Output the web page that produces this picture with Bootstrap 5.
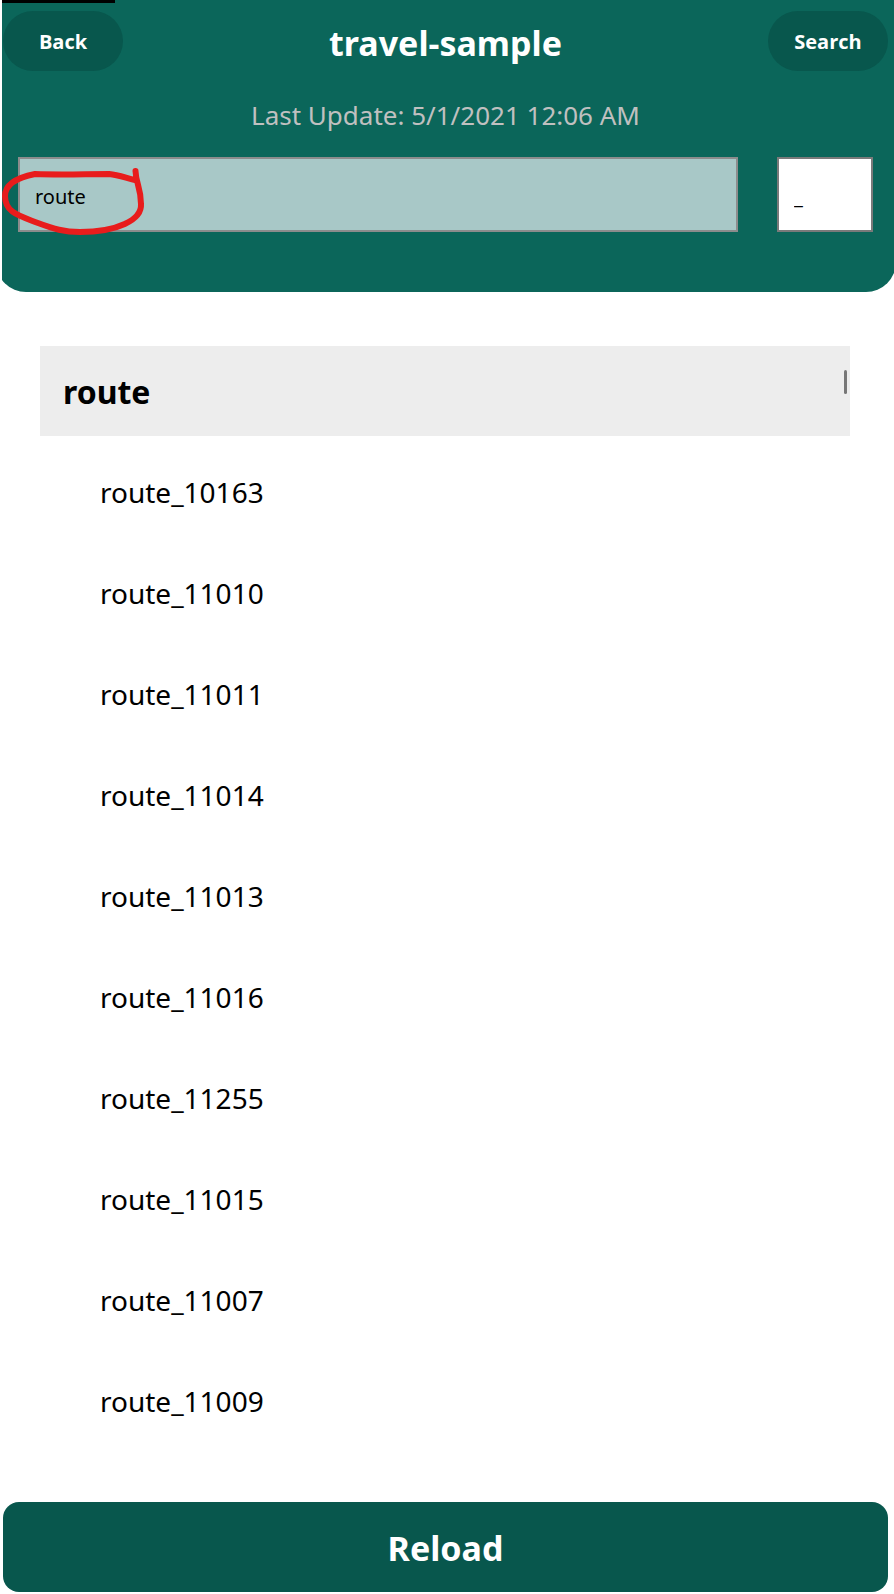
<!DOCTYPE html>
<html lang="en">
<head>
<meta charset="utf-8">
<meta name="viewport" content="width=device-width, initial-scale=1">
<title>travel-sample</title>
<link href="https://cdn.jsdelivr.net/npm/bootstrap@5.3.0/dist/css/bootstrap.min.css" rel="stylesheet">
<style>
  body { font-family: "Noto Sans", "Open Sans", sans-serif; color: #000; background: #fff; }
  .page { margin-left: 2px; overflow: hidden; }
  .hero { background: #0b665a; margin: 0 -2px 0 -6px; padding: 11px 8px 60px 7px; border-radius: 0 0 30px 30px; }
  .progress-strip { width: 113px; height: 3px; background: #000; }
  .btn-pill { width: 120px; height: 60px; border-radius: 30px; background: #08574d; color: #fff; font-size: 20px; font-weight: 700; padding: 2px 0 0; font-family: "Open Sans", sans-serif; }
  .btn-pill:hover, .btn-reload:hover { background: #064a41; color: #fff; }
  .hero-title { font-size: 34px; line-height: 64px; font-weight: 700; color: #fff; }
  .updated { font-size: 26px; line-height: 40px; color: #c0c0c0; margin-top: 20px; margin-bottom: 22px; }
  .filters { gap: 39px; padding: 0 15px; }
  .filters .form-control { height: 75px; border: 2px solid #8c8c8c; border-radius: 0; padding: 0 15px; font-size: 20px; color: #000; }
  .filters .filter-key { background: #a8c8c7; padding-top: 4px; }
  .filters .filter-sep { width: 96px; flex: none; border-color: #7a7a7a; padding-top: 4px; }
  .results { margin: 54px 44px 50px 38px; }
  .group-head { background: #ededed; height: 90px; padding: 2px 5px 0 23px; font-size: 32px; font-weight: 700; }
  .scroll-thumb { width: 3px; height: 24px; top: 24px; right: 3px; background: #777; border-radius: 2px; }
  .results .list-group { padding: 5px 0 1px; }
  .results .list-group-item { height: 101px; padding: 0 60px; font-size: 28px; color: #000; background: none; }
  .btn-reload { height: 90px; border-radius: 16px; background: #08574d; color: #fff; font-size: 34px; font-weight: 700; }
  .btn.btn-reload { padding: 2px 0 0; }
  .footer-bar { padding: 0 6px 2px 1px; }
  .ink { left: -2px; top: 165px; pointer-events: none; }
</style>
</head>
<body>
<div class="page position-relative">
  <div class="progress-strip position-absolute top-0"></div>
  <header class="hero">
    <div class="d-flex align-items-start justify-content-between">
      <button type="button" class="btn btn-pill border-0">Back</button>
      <h1 class="hero-title m-0 text-center">travel-sample</h1>
      <button type="button" class="btn btn-pill border-0">Search</button>
    </div>
    <p class="updated text-center">Last Update: 5/1/2021 12:06 AM</p>
    <form class="filters d-flex">
      <input type="text" class="form-control filter-key" aria-label="Document key" value="route">
      <input type="text" class="form-control filter-sep" aria-label="Separator" value="_">
    </form>
  </header>

  <main class="results">
    <div class="group-head position-relative d-flex align-items-center">route
      <span class="scroll-thumb position-absolute"></span>
    </div>
    <ul class="list-group list-group-flush">
      <li class="list-group-item border-0 d-flex align-items-center">route_10163</li>
      <li class="list-group-item border-0 d-flex align-items-center">route_11010</li>
      <li class="list-group-item border-0 d-flex align-items-center">route_11011</li>
      <li class="list-group-item border-0 d-flex align-items-center">route_11014</li>
      <li class="list-group-item border-0 d-flex align-items-center">route_11013</li>
      <li class="list-group-item border-0 d-flex align-items-center">route_11016</li>
      <li class="list-group-item border-0 d-flex align-items-center">route_11255</li>
      <li class="list-group-item border-0 d-flex align-items-center">route_11015</li>
      <li class="list-group-item border-0 d-flex align-items-center">route_11007</li>
      <li class="list-group-item border-0 d-flex align-items-center">route_11009</li>
    </ul>
  </main>

  <footer class="footer-bar">
    <button type="button" class="btn btn-reload border-0 w-100">Reload</button>
  </footer>

  <svg class="ink position-absolute" width="150" height="75" viewBox="0 165 150 75" fill="none" stroke="#e81c1c" stroke-width="6" stroke-linecap="round" stroke-linejoin="round" aria-hidden="true">
    <path d="M135.500 171C136 184 141 188 141 204C142 220 117 232 80 232C64 232 54 229 38 223C20 216 5 213 5 196C5 183 20 177 35 174C62 175 85 174 109 174C119 175 126 178 135 180"/>
  </svg>
</div>
<script src="https://cdn.jsdelivr.net/npm/bootstrap@5.3.0/dist/js/bootstrap.bundle.min.js"></script>
</body>
</html>
